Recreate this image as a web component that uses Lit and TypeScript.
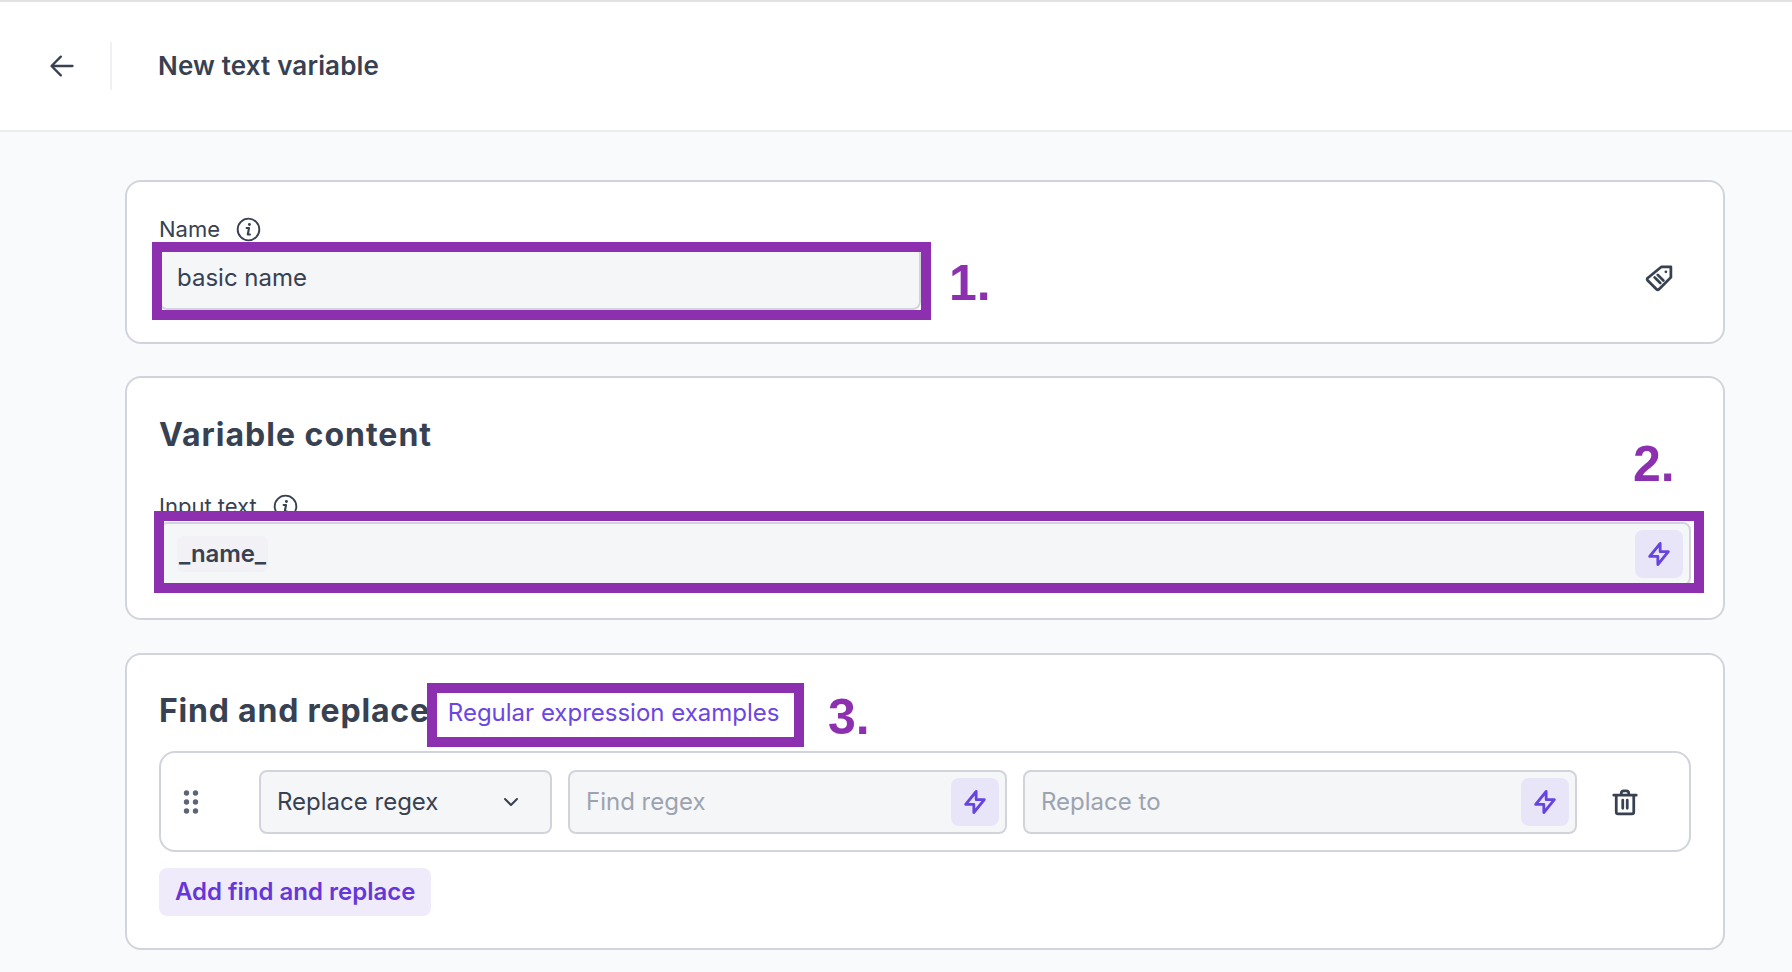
import { LitElement, html, css, svg } from 'lit';
import { customElement } from 'lit/decorators.js';

const bolt = svg`<path d="M13 10V3L4 14h7v7l9-11h-7Z" fill="none" stroke="currentColor" stroke-width="2.400" stroke-linejoin="round" stroke-linecap="round"/>`;

const info = html`<svg class="info" viewBox="0 0 24 24" fill="none">
  <circle cx="12" cy="12" r="10.4" stroke="currentColor" stroke-width="1.8"/>
  <path d="M10.2 10.6h2.3l-1.200 6.200h2.100" stroke="currentColor" stroke-width="2" stroke-linecap="round" stroke-linejoin="round"/>
  <circle cx="12.900" cy="7.200" r="1.400" fill="currentColor"/>
</svg>`;

@customElement('app-root')
export class AppRoot extends LitElement {
  static styles = css`
    :host {
      display: block;
      position: relative;
      height: 972px;
      overflow: hidden;
      background: #f9fafb;
      color: #374151;
      font-family: Inter, "Liberation Sans", sans-serif;
    }
    .topbar {
      display: flex;
      align-items: center;
      height: 128px;
      border-top: 2px solid #e0e2e4;
      border-bottom: 2px solid #e9ebef;
      background: #fff;
    }
    .back {
      display: flex;
      width: 112px;
      height: 48px;
      align-items: center;
      padding-left: 48px;
      box-sizing: border-box;
      border-right: 2px solid #eef0f2;
    }
    .back svg { width: 28px; height: 28px; color: #374151; }
    .topbar h1 {
      margin: 0 0 2px 46px;
      font-size: 26px;
      font-weight: 600;
      letter-spacing: 0.15px;
      color: #374151;
    }
    main {
      display: flex;
      flex-direction: column;
      gap: 32px;
      padding: 48px 67px 0 125px;
    }
    .card {
      box-sizing: border-box;
      border: 2px solid #d1d5db;
      border-radius: 16px;
      background: #fff;
      padding: 0 32px;
    }
    .card.name { height: 164px; padding-top: 35px; }
    .card.content { height: 244px; padding-top: 33px; }
    .card.replace { height: 297px; margin-top: 1px; padding-top: 32px; }
    h2 {
      margin: 0;
      font-size: 32px;
      line-height: 48px;
      font-weight: 700;
      color: #374151;
    }
    .content h2 { letter-spacing: 1px; }
    .replace h2 { letter-spacing: 0.8px; }
    .label {
      display: flex;
      align-items: center;
      gap: 16px;
      height: 24px;
      font-size: 22px;
      color: #374151;
    }
    .info { width: 25px; height: 25px; flex: none; }
    .name-row {
      display: flex;
      align-items: center;
      justify-content: space-between;
      margin-top: 5px;
      padding-right: 17px;
    }
    .field {
      box-sizing: border-box;
      display: flex;
      align-items: center;
      height: 64px;
      background: #f5f6f8;
      border: 2px solid #d1d5db;
      border-radius: 8px;
      padding: 0 6px 0 16px;
      font-size: 24px;
      color: #374151;
    }
    .field.basic { width: 762px; padding-bottom: 2px; }
    .name-row .tag { width: 30px; height: 30px; color: #374151; }
    .content .label { margin-top: 35px; }
    .content .field { margin-top: 4px; }
    .chip {
      padding: 3px 2px;
      border-radius: 6px;
      background: #f1f1f6;
      font-weight: 600;
      line-height: 30px;
      letter-spacing: -0.1px;
    }
    .spacer { flex: 1; }
    .bolt {
      display: flex;
      align-items: center;
      justify-content: center;
      flex: none;
      width: 48px;
      height: 48px;
      border-radius: 8px;
      background: #e9e5f8;
      color: #6644e0;
    }
    .bolt svg { width: 28px; height: 28px; }
    .placeholder { color: #9ca3af; }
    .heading-row { display: flex; align-items: flex-start; gap: 18px; }
    .link { font-size: 24px; line-height: 52px; color: #6c46e4; }
    .rule {
      box-sizing: border-box;
      display: flex;
      align-items: center;
      height: 101px;
      margin-top: 12px;
      border: 2px solid #d1d5db;
      border-radius: 16px;
    }
    .grip { width: 22px; height: 26px; margin-left: 19px; color: #5b6675; flex: none; }
    .select {
      width: 293px;
      margin-left: 57px;
      justify-content: space-between;
      padding-right: 27px;
      flex: none;
    }
    .select svg { width: 24px; height: 24px; color: #374151; }
    .find { width: 439px; margin-left: 16px; justify-content: space-between; flex: none; }
    .to { width: 554px; margin-left: 16px; justify-content: space-between; flex: none; }
    .trash { width: 30px; height: 30px; margin-left: 33px; color: #374151; flex: none; }
    .add {
      display: inline-flex;
      align-items: center;
      height: 48px;
      margin-top: 16px;
      padding: 0 16px 2px;
      border: 0;
      border-radius: 8px;
      background: #f0ebfb;
      color: #6636d8;
      font: 600 24px Inter, "Liberation Sans", sans-serif;
    }

    /* annotations drawn on top of the screenshot */
    .frame {
      position: absolute;
      box-sizing: border-box;
      border: 10px solid #8d30b0;
    }
    .frame-1 { left: 152px; top: 242px; width: 779px; height: 78px; }
    .frame-2 { left: 154px; top: 511px; width: 1550px; height: 82px; }
    .frame-3 { left: 427px; top: 683px; width: 377px; height: 64px; }
    .mark {
      position: absolute;
      font: 700 50px/1 "Liberation Sans", sans-serif;
      color: #8d30b0;
    }
    .mark-1 { left: 949px; top: 258px; }
    .mark-2 { left: 1633px; top: 439px; }
    .mark-3 { left: 828px; top: 692px; }
  `;

  render() {
    return html`
      <header class="topbar">
        <div class="back">
          <svg viewBox="0 0 24 24" fill="none" stroke="currentColor" stroke-width="2" stroke-linecap="round" stroke-linejoin="round">
            <path d="M21 12H3.500M11 4l-8 8 8 8"/>
          </svg>
        </div>
        <h1>New text variable</h1>
      </header>

      <main>
        <section class="card name">
          <div class="label">Name ${info}</div>
          <div class="name-row">
            <div class="field basic">basic name</div>
            <svg class="tag" viewBox="0 0 24 24" fill="none" stroke="currentColor" stroke-width="2.200" stroke-linejoin="round">
              <path d="M14 3h7.500v8.500L12 21a1.500 1.500 0 0 1-2 0l-7-7a1.500 1.500 0 0 1 0-2Z"/>
              <path d="m8.500 11.500 4.500 4.500M11 9.500l4.500 4.500" stroke-linecap="round"/>
              <circle cx="17.500" cy="7" r="1.100" fill="currentColor" stroke="none"/>
            </svg>
          </div>
        </section>

        <section class="card content">
          <h2>Variable content</h2>
          <div class="label">Input text ${info}</div>
          <div class="field">
            <span class="chip">_name_</span>
            <span class="spacer"></span>
            <span class="bolt"><svg viewBox="0 0 24 24">${bolt}</svg></span>
          </div>
        </section>

        <section class="card replace">
          <div class="heading-row">
            <h2>Find and replace</h2>
            <span class="link">Regular expression examples</span>
          </div>
          <div class="rule">
            <svg class="grip" viewBox="0 0 22 26" fill="currentColor">
              <circle cx="6.500" cy="4" r="2.700"/><circle cx="15.500" cy="4" r="2.700"/>
              <circle cx="6.500" cy="13" r="2.700"/><circle cx="15.500" cy="13" r="2.700"/>
              <circle cx="6.500" cy="22" r="2.700"/><circle cx="15.500" cy="22" r="2.700"/>
            </svg>
            <div class="field select">
              Replace regex
              <svg viewBox="0 0 24 24" fill="none" stroke="currentColor" stroke-width="2" stroke-linecap="round" stroke-linejoin="round"><path d="m6 9 6 6 6-6"/></svg>
            </div>
            <div class="field find">
              <span class="placeholder">Find regex</span>
              <span class="bolt"><svg viewBox="0 0 24 24">${bolt}</svg></span>
            </div>
            <div class="field to">
              <span class="placeholder">Replace to</span>
              <span class="bolt"><svg viewBox="0 0 24 24">${bolt}</svg></span>
            </div>
            <svg class="trash" viewBox="0 0 24 24" fill="none" stroke="currentColor" stroke-width="2.200" stroke-linecap="round" stroke-linejoin="round">
              <path d="M3 6.500h18M9 6.500V5a2 2 0 0 1 2-2h2a2 2 0 0 1 2 2v1.500M5 6.500V20a1.500 1.500 0 0 0 1.500 1.500h11A1.500 1.500 0 0 0 19 20V6.500M10.200 10.500v6.500M13.800 10.500v6.500"/>
            </svg>
          </div>
          <button class="add">Add find and replace</button>
        </section>
      </main>

      <div class="frame frame-1"></div>
      <div class="frame frame-2"></div>
      <div class="frame frame-3"></div>
      <span class="mark mark-1">1.</span>
      <span class="mark mark-2">2.</span>
      <span class="mark mark-3">3.</span>
    `;
  }
}
